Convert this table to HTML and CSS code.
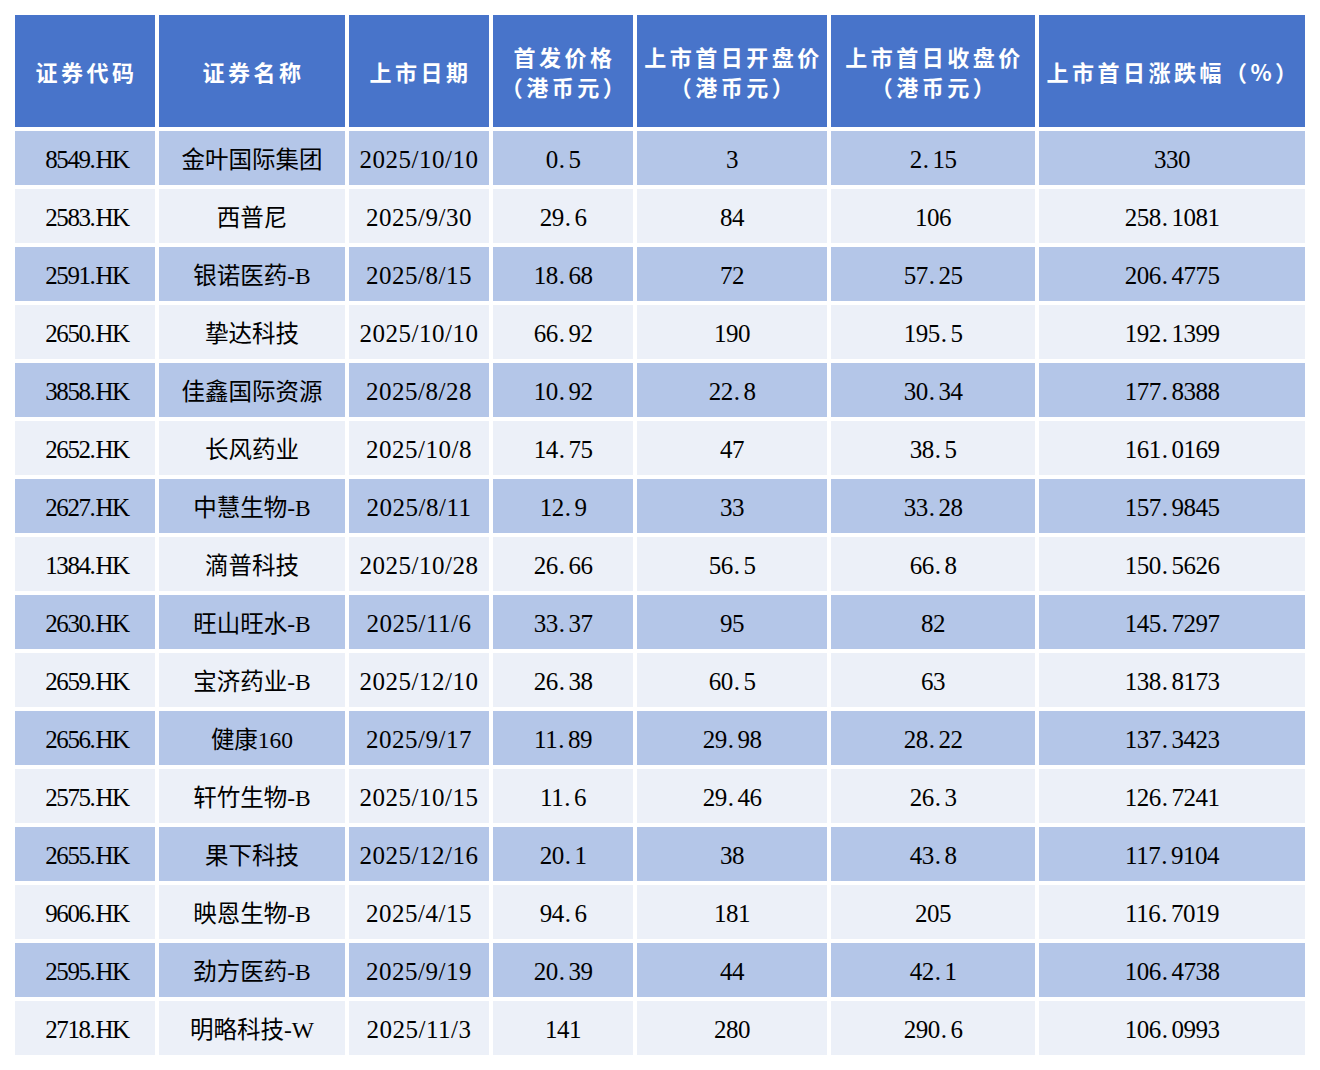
FILE: index.html
```html
<!DOCTYPE html>
<html lang="zh-CN">
<head>
<meta charset="utf-8">
<title>港股新股上市首日涨跌幅</title>
<link rel="stylesheet" href="styles.css">
</head>
<body>
<div class="table">
  <div class="th">证券代码</div>
  <div class="th">证券名称</div>
  <div class="th">上市日期</div>
  <div class="th">首发价格<br>（港币元）</div>
  <div class="th">上市首日开盘价<br>（港币元）</div>
  <div class="th">上市首日收盘价<br>（港币元）</div>
  <div class="th">上市首日涨跌幅（%）</div>

  <div class="td a code">8549<span class="pt">.</span>HK</div><div class="td a name">金叶国际集团</div><div class="td a date">2025/10/10</div><div class="td a">0<span class="pt">.</span>5</div><div class="td a">3</div><div class="td a">2<span class="pt">.</span>15</div><div class="td a">330</div>
  <div class="td b code">2583<span class="pt">.</span>HK</div><div class="td b name">西普尼</div><div class="td b date">2025/9/30</div><div class="td b">29<span class="pt">.</span>6</div><div class="td b">84</div><div class="td b">106</div><div class="td b">258<span class="pt">.</span>1081</div>
  <div class="td a code">2591<span class="pt">.</span>HK</div><div class="td a name">银诺医药-B</div><div class="td a date">2025/8/15</div><div class="td a">18<span class="pt">.</span>68</div><div class="td a">72</div><div class="td a">57<span class="pt">.</span>25</div><div class="td a">206<span class="pt">.</span>4775</div>
  <div class="td b code">2650<span class="pt">.</span>HK</div><div class="td b name">挚达科技</div><div class="td b date">2025/10/10</div><div class="td b">66<span class="pt">.</span>92</div><div class="td b">190</div><div class="td b">195<span class="pt">.</span>5</div><div class="td b">192<span class="pt">.</span>1399</div>
  <div class="td a code">3858<span class="pt">.</span>HK</div><div class="td a name">佳鑫国际资源</div><div class="td a date">2025/8/28</div><div class="td a">10<span class="pt">.</span>92</div><div class="td a">22<span class="pt">.</span>8</div><div class="td a">30<span class="pt">.</span>34</div><div class="td a">177<span class="pt">.</span>8388</div>
  <div class="td b code">2652<span class="pt">.</span>HK</div><div class="td b name">长风药业</div><div class="td b date">2025/10/8</div><div class="td b">14<span class="pt">.</span>75</div><div class="td b">47</div><div class="td b">38<span class="pt">.</span>5</div><div class="td b">161<span class="pt">.</span>0169</div>
  <div class="td a code">2627<span class="pt">.</span>HK</div><div class="td a name">中慧生物-B</div><div class="td a date">2025/8/11</div><div class="td a">12<span class="pt">.</span>9</div><div class="td a">33</div><div class="td a">33<span class="pt">.</span>28</div><div class="td a">157<span class="pt">.</span>9845</div>
  <div class="td b code">1384<span class="pt">.</span>HK</div><div class="td b name">滴普科技</div><div class="td b date">2025/10/28</div><div class="td b">26<span class="pt">.</span>66</div><div class="td b">56<span class="pt">.</span>5</div><div class="td b">66<span class="pt">.</span>8</div><div class="td b">150<span class="pt">.</span>5626</div>
  <div class="td a code">2630<span class="pt">.</span>HK</div><div class="td a name">旺山旺水-B</div><div class="td a date">2025/11/6</div><div class="td a">33<span class="pt">.</span>37</div><div class="td a">95</div><div class="td a">82</div><div class="td a">145<span class="pt">.</span>7297</div>
  <div class="td b code">2659<span class="pt">.</span>HK</div><div class="td b name">宝济药业-B</div><div class="td b date">2025/12/10</div><div class="td b">26<span class="pt">.</span>38</div><div class="td b">60<span class="pt">.</span>5</div><div class="td b">63</div><div class="td b">138<span class="pt">.</span>8173</div>
  <div class="td a code">2656<span class="pt">.</span>HK</div><div class="td a name">健康160</div><div class="td a date">2025/9/17</div><div class="td a">11<span class="pt">.</span>89</div><div class="td a">29<span class="pt">.</span>98</div><div class="td a">28<span class="pt">.</span>22</div><div class="td a">137<span class="pt">.</span>3423</div>
  <div class="td b code">2575<span class="pt">.</span>HK</div><div class="td b name">轩竹生物-B</div><div class="td b date">2025/10/15</div><div class="td b">11<span class="pt">.</span>6</div><div class="td b">29<span class="pt">.</span>46</div><div class="td b">26<span class="pt">.</span>3</div><div class="td b">126<span class="pt">.</span>7241</div>
  <div class="td a code">2655<span class="pt">.</span>HK</div><div class="td a name">果下科技</div><div class="td a date">2025/12/16</div><div class="td a">20<span class="pt">.</span>1</div><div class="td a">38</div><div class="td a">43<span class="pt">.</span>8</div><div class="td a">117<span class="pt">.</span>9104</div>
  <div class="td b code">9606<span class="pt">.</span>HK</div><div class="td b name">映恩生物-B</div><div class="td b date">2025/4/15</div><div class="td b">94<span class="pt">.</span>6</div><div class="td b">181</div><div class="td b">205</div><div class="td b">116<span class="pt">.</span>7019</div>
  <div class="td a code">2595<span class="pt">.</span>HK</div><div class="td a name">劲方医药-B</div><div class="td a date">2025/9/19</div><div class="td a">20<span class="pt">.</span>39</div><div class="td a">44</div><div class="td a">42<span class="pt">.</span>1</div><div class="td a">106<span class="pt">.</span>4738</div>
  <div class="td b code">2718<span class="pt">.</span>HK</div><div class="td b name">明略科技-W</div><div class="td b date">2025/11/3</div><div class="td b">141</div><div class="td b">280</div><div class="td b">290<span class="pt">.</span>6</div><div class="td b">106<span class="pt">.</span>0993</div>
</div>
</body>
</html>
```

FILE: styles.css
```css
html, body {
  margin: 0;
  padding: 0;
  background: #ffffff;
}
body {
  padding: 15px;
  font-family: "Liberation Serif", "Noto Sans CJK SC", serif;
}
.table {
  display: grid;
  grid-template-columns: 140px 186px 140px 140px 190px 204px 266px;
  grid-template-rows: 112px;
  grid-auto-rows: 54px;
  gap: 4px;
  width: 1290px;
}
.th {
  background: #4874CA;
  color: #ffffff;
  font-family: "Noto Sans CJK SC", sans-serif;
  font-weight: 700;
  font-size: 22px;
  letter-spacing: 3.5px;
  line-height: 30px;
  display: flex;
  align-items: center;
  justify-content: center;
  text-align: center;
  padding-left: 3px;
}
.td {
  display: flex;
  align-items: center;
  justify-content: center;
  font-size: 25px;
  letter-spacing: -0.5px;
  line-height: 30px;
  color: #000000;
  padding-top: 4px;
  white-space: pre;
}
.pt {
  padding-left: 1px;
  padding-right: 4px;
}
.td.code {
  letter-spacing: -1.4px;
  padding-left: 4px;
}
.td.code .pt {
  padding-left: 0;
  padding-right: 1px;
}
.td.date {
  letter-spacing: 0.5px;
}
.td.name {
  font-size: 23.5px;
  letter-spacing: 0;
}
.a {
  background: #B4C6E8;
}
.b {
  background: #ECF0F8;
}
```
